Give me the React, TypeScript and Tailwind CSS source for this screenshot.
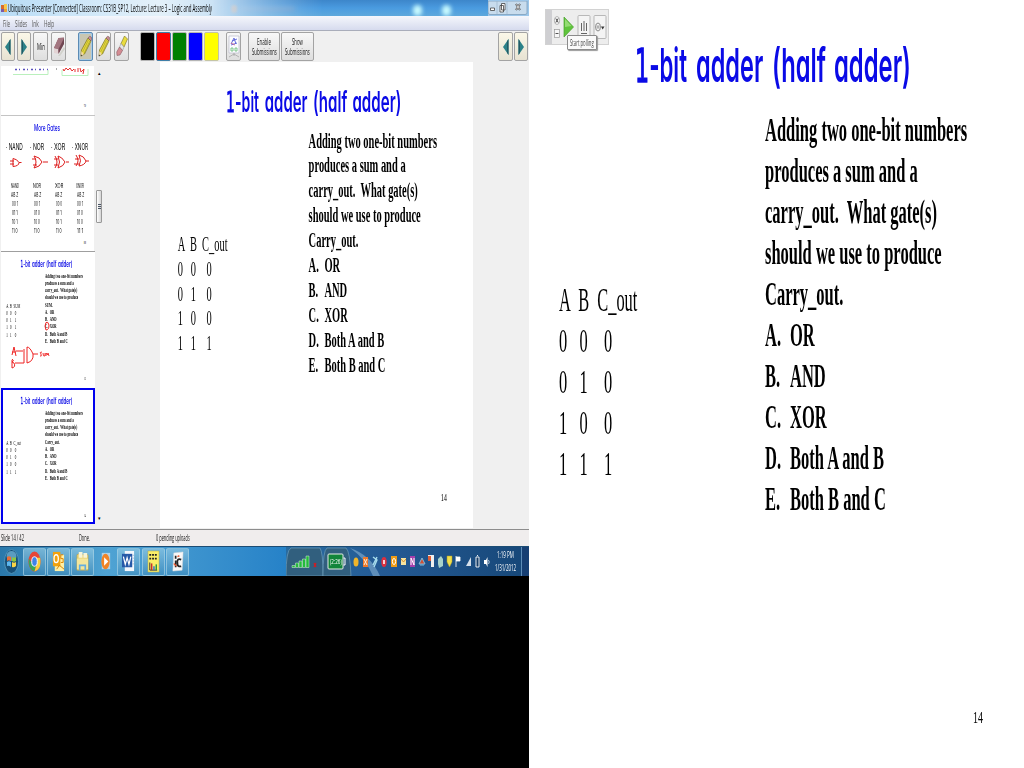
import { useLayoutEffect, useRef, useState, type ReactNode } from "react";

/* Text squeezed horizontally so that it fills the width of its box. */
function Fit({ className = "", children }: { className?: string; children: ReactNode }) {
  const box = useRef<HTMLSpanElement>(null);
  const text = useRef<HTMLSpanElement>(null);
  const [scale, setScale] = useState(1);
  useLayoutEffect(() => {
    if (box.current && text.current) setScale(box.current.clientWidth / text.current.offsetWidth);
  }, []);
  return (
    <span ref={box} className={`block shrink-0 whitespace-pre ${className}`}>
      <span ref={text} className="inline-block origin-left" style={{ transform: `scaleX(${scale})` }}>
        {children}
      </span>
    </span>
  );
}

const COMIC = "font-['Inter',sans-serif] [font-feature-settings:'cv11']";
const SERIF = "font-['Liberation_Serif',serif]";

const CARRY_ROWS = ["A  B  C_out", "0   0    0", "0   1    0", "1   0    0", "1   1    1"];
const SUM_ROWS = ["A  B  SUM", "0   0    0", "0   1    1", "1   0    1", "1   1    0"];
const CHOICES = [
  ["A.", "OR"],
  ["B.", "AND"],
  ["C.", "XOR"],
  ["D.", "Both A and B"],
  ["E.", "Both B and C"],
];

/* Full-size slide, 493 x 768; previews scale it down. */
function Slide({ target, rows, page }: { target: string; rows: string[]; page: string }) {
  const lines = ["Adding two one-bit numbers", "produces a sum and a", "carry_out.  What gate(s)", "should we use to produce", target];
  return (
    <div className="flex h-[768px] w-[493px] flex-col bg-white text-black">
      <div className={`flex h-[110px] pl-[104px] pt-[34px] text-[47px] font-semibold leading-[62px] text-[#0a0ae6] ${COMIC}`}>
        <Fit className="w-[52px]"><span className="font-['DejaVu_Sans'] font-normal [-webkit-text-stroke:1.5px_#0a0ae6]">1</span>-bit</Fit>
        <Fit className="ml-[9px] w-[67px]">adder</Fit>
        <Fit className="ml-[9px] w-[54px]">(half</Fit>
        <Fit className="ml-[8px] w-[77px]">adder)</Fit>
      </div>
      <div className={`flex h-[590px] text-[33px] leading-[41px] ${SERIF}`}>
        <div className="w-[234px] shrink-0 pl-[28px] pt-[170px]">
          <div className="origin-left scale-x-[0.497] whitespace-pre">
            {rows.map((r, i) => (
              <div key={i}>{r}</div>
            ))}
          </div>
        </div>
        <div className="w-[404px] shrink-0 origin-left scale-x-[0.5] whitespace-pre font-bold">
          {lines.map((l) => (
            <div key={l}>{l}</div>
          ))}
          {CHOICES.map(([k, v]) => (
            <div key={k} className="flex">
              <span className="w-[50px]">{k}</span>
              <span>{v}</span>
            </div>
          ))}
        </div>
      </div>
      <div className={`flex justify-end pr-[41px] text-[17px] leading-[36px] ${SERIF}`}>
        <Fit className="w-[10px]">{page}</Fit>
      </div>
    </div>
  );
}

function Thumb({ children }: { children: ReactNode }) {
  return (
    <div className="h-[135px] w-[93px] shrink-0 overflow-hidden">
      <div className="h-[768px] w-[493px] origin-top-left scale-x-[0.188] scale-y-[0.176]">{children}</div>
    </div>
  );
}

function ToolButton({ className = "", children }: { className?: string; children?: ReactNode }) {
  return (
    <div className={`flex h-[29px] shrink-0 items-center justify-center rounded-[2px] border border-[#a3a3a3] bg-linear-to-b ${className}`}>
      {children}
    </div>
  );
}

function Arrow({ right = false }: { right?: boolean }) {
  return (
    <svg className="h-[16px] w-[6px]" viewBox="0 0 6 16" preserveAspectRatio="none">
      <path d={right ? "M0.5 0 6 8 0.5 16Z" : "M5.5 0 0 8 5.5 16Z"} fill="#2c8288" />
      <path d={right ? "M0.5 0 2 2.2V13.8L0.5 16Z" : "M5.5 0 4 2.2V13.8L5.5 16Z"} fill="#225c66" />
    </svg>
  );
}

function Pencil() {
  return (
    <svg className="h-[23px] w-[12px]" viewBox="0 0 12 23" preserveAspectRatio="none">
      <path d="M8 3 11 6 4.5 19 1 21 1.5 15Z" fill="#e9dc3f" stroke="#77701f" strokeWidth=".7" />
      <path d="M8.7 4.5 2.6 17M10 5.5 4 18.5" stroke="#a29a25" strokeWidth=".6" />
      <path d="M8 3Q9.5 0 11.3 2 12 4 11 6Z" fill="#c88d92" stroke="#6d4a4d" strokeWidth=".5" />
      <path d="M1.4 16 3.8 19.2 1 21Z" fill="#efd7ae" />
      <path d="M1.1 19.5 2 20.5 .8 21.5Z" fill="#222" />
    </svg>
  );
}

function Eraser() {
  return (
    <svg className="h-[23px] w-[12px]" viewBox="0 0 12 23" preserveAspectRatio="none">
      <path d="M5 21 11 12 12 14 7 21Z" fill="#d2d2cc" />
      <path d="M5.500 3 11 2.500 11 8 5.500 18 1 17 1 13Z" fill="#8a5660" />
      <path d="M1 13 5.500 14 5.500 19 1 18Z" fill="#e2d3d4" />
      <path d="M5.500 14 11 3 11 9 5.500 19Z" fill="#704752" />
      <path d="M5.500 3 11 3 5.500 14 1 13Z" fill="#a37680" />
    </svg>
  );
}

function PencilEraser() {
  return (
    <svg className="h-[23px] w-[12px]" viewBox="0 0 12 23" preserveAspectRatio="none">
      <path d="M8.5 1 11.5 4 8 12 5 8.5Z" fill="#e9dc3f" stroke="#77701f" strokeWidth=".6" />
      <path d="M5 8.5 8 12 6.5 15.5 3.5 12Z" fill="#e6e6e6" stroke="#888" strokeWidth=".5" />
      <path d="M3.5 12 6.5 15.5 4 20 1 20.5 .7 17Z" fill="#d48c93" stroke="#7d4d52" strokeWidth=".5" />
    </svg>
  );
}

function PollIcon() {
  return (
    <svg className="h-[25px] w-[12px]" viewBox="0 0 12 25" preserveAspectRatio="none">
      <path d="M1 2H11V19H1Z" fill="#fcfcff" stroke="#b9bac8" strokeWidth=".7" />
      <path d="M3 10 6 4 8 10M4 7 9 5M3 11 9 9" stroke="#5a62d8" fill="none" strokeWidth=".9" />
      <path d="M3 9 7 11" stroke="#d05c82" strokeWidth=".8" />
      <path d="M3 14H5V17H3ZM7 14H9V17H7Z" fill="none" stroke="#63bb72" strokeWidth=".8" />
      <path d="M6 19V22M1 23 6 20 11 23" stroke="#a6a6a6" fill="none" strokeWidth=".8" />
    </svg>
  );
}

function TitleBar() {
  return (
    <div className="flex h-[16px] items-center bg-linear-to-r from-[#b8dcf6] from-0% via-[#e4f1fa] via-30% to-[#9cc6e9] to-60% text-black">
      <svg className="ml-[1px] h-[9px] w-[6px] shrink-0" viewBox="0 0 6 9" preserveAspectRatio="none">
        <path d="M0 1H3V5H0Z" fill="#d96b2c" />
        <path d="M3 0H6V5H3Z" fill="#f5c84b" />
        <path d="M0 5H3V8H0Z" fill="#7b5aa8" />
        <path d="M3 5H6V8H3Z" fill="#e9a23b" />
      </svg>
      <Fit className="ml-[1px] w-[204px] text-[10px] leading-[16px]">Ubiquitous Presenter [Connected] Classroom: CS31B_SP12, Lecture: Lecture 3 – Logic and Assembly</Fit>
      <div className="flex h-[16px] flex-1 items-end bg-linear-to-b from-[#3d86ca] via-[#4a9be0] to-[#5da8dc] mask-l-from-60% mask-l-to-100%">
        <span className="mb-[3px] ml-[19px] h-[8px] w-[6px] rounded-full bg-[#e49a6c] blur-[1px]" />
        <span className="mb-[5px] ml-[4px] h-[4px] w-[54px] bg-[#6e9dcc] blur-[2px]" />
        <span className="ml-[118px] h-[11px] w-[9px] rounded-full bg-[#c9fbff] blur-[2px]" />
        <span className="ml-[20px] h-[11px] w-[9px] rounded-full bg-[#c9fbff] blur-[2px]" />
      </div>
      <svg className="mr-[1px] h-[14px] w-[40px] shrink-0" viewBox="0 0 40 14" preserveAspectRatio="none">
        <path d="M0 0H39V12Q39 13.500 37 13.500H2Q0 13.500 0 11Z" fill="#c8dced" stroke="#7f9fbd" strokeWidth=".8" />
        <path d="M9 0V13M19 0V13" stroke="#9bb5cc" strokeWidth=".7" />
        <path d="M2.500 7H6.500V9.500H2.500Z" fill="#fff" stroke="#444" strokeWidth=".8" />
        <path d="M13.500 2.500H17V9H13.500ZM12 4.500H15.500V11H12Z" fill="#fff" stroke="#444" strokeWidth=".8" />
        <path d="M28 3 32 9M32 3 28 9" stroke="#444" strokeWidth="2" />
        <path d="M28.300 3.300 31.700 8.700M31.700 3.300 28.300 8.700" stroke="#fff" strokeWidth=".8" />
      </svg>
    </div>
  );
}

const GREY = "from-[#f8f8f8] to-[#dedede]";
const CREAM = "from-[#fbf8e8] to-[#e7e2d2]";

function Toolbar() {
  return (
    <div className="flex h-[32px] items-start bg-[#f0f0f0] pt-px text-[8.5px] leading-[10px] text-[#111]">
      <ToolButton className={`ml-px w-[14px] ${CREAM}`}><Arrow /></ToolButton>
      <ToolButton className={`ml-[2px] w-[14px] ${CREAM}`}><Arrow right /></ToolButton>
      <ToolButton className={`ml-[2px] w-[15px] ${GREY}`}><Fit className="w-[8px]">Min</Fit></ToolButton>
      <ToolButton className={`ml-[3px] w-[15px] ${GREY}`}><Eraser /></ToolButton>
      <div className="ml-[12px] flex h-[29px] w-[15px] shrink-0 items-center justify-center rounded-[2px] border border-[#5b8bb5] bg-[#c9c6b2] shadow-[inset_0_0_0_1px_#a9cbe5]"><Pencil /></div>
      <ToolButton className={`ml-[3px] w-[15px] ${GREY}`}><Pencil /></ToolButton>
      <ToolButton className={`ml-[3px] w-[15px] ${GREY}`}><PencilEraser /></ToolButton>
      <div className="ml-[11px] flex gap-px">
        {["bg-black border-[#b5b5b5]", "bg-[#ff0000] border-[#3f7fa8]", "bg-[#008000] border-[#b5b5b5]", "bg-[#0000ff] border-[#b5b5b5]", "bg-[#ffff00] border-[#c5c5a5]"].map((c) => (
          <span key={c} className={`h-[29px] w-[15px] rounded-[2px] border ${c}`} />
        ))}
      </div>
      <ToolButton className={`ml-[7px] w-[15px] ${GREY}`}><PollIcon /></ToolButton>
      <ToolButton className={`ml-[7px] w-[32px] flex-col border-[#8d8d8d] ${GREY}`}>
        <Fit className="h-[10px] w-[14px]">Enable</Fit>
        <Fit className="h-[10px] w-[25px]">Submissions</Fit>
      </ToolButton>
      <ToolButton className={`ml-px w-[33px] flex-col border-[#8d8d8d] ${GREY}`}>
        <Fit className="h-[10px] w-[11px]">Show</Fit>
        <Fit className="h-[10px] w-[25px]">Submissions</Fit>
      </ToolButton>
      <ToolButton className={`ml-auto w-[15px] ${CREAM}`}><Arrow /></ToolButton>
      <ToolButton className={`mr-px ml-px w-[14px] ${CREAM}`}><Arrow right /></ToolButton>
    </div>
  );
}

const GATES = [
  { name: "NAND", head: "· NAND", cls: "w-[17px]", rows: ["AB Z", "00 1", "01 1", "10 1", "11 0"] },
  { name: "NOR", head: "· NOR", cls: "w-[14px]", rows: ["AB Z", "00 1", "01 0", "10 0", "11 0"] },
  { name: "XOR", head: "· XOR", cls: "w-[14px]", rows: ["AB Z", "00 0", "01 1", "10 1", "11 0"] },
  { name: "XNOR", head: "· XNOR", cls: "w-[16px]", rows: ["AB Z", "00 1", "01 0", "10 0", "11 1"] },
];

function GatesThumb() {
  return (
    <div className={`flex h-[135px] w-[93px] shrink-0 flex-col items-center bg-white ${COMIC}`}>
      <Fit className="mt-[6px] mr-[2px] w-[26px] text-[9px] font-medium leading-[12px] text-[#0a0ae6]">More Gates</Fit>
      <div className="mt-[7px] flex h-[12px] w-full justify-between pr-[6px] pl-[5px] text-[8.5px] leading-[12px]">
        {GATES.map((g) => (
          <Fit key={g.name} className={g.cls}>{g.head}</Fit>
        ))}
      </div>
      <svg className="mt-[1px] h-[16px] w-[93px]" viewBox="0 0 93 16" preserveAspectRatio="none" fill="none" stroke="#dd1c1c" strokeWidth="1">
        <path d="M9 7H13M9 10H13M12 4.500V12.500Q18 12 18 8.500 16 5 12 4.500M18 8.500H20.500" />
        <path d="M31 5H35M32 11H36M33 2Q37 8 33 14Q39 13 41 8 39 3 33 2M42 8H47" />
        <path d="M53 5H57M53 11H57M54 2Q58 8 54 14M57 2Q60 8 57 14Q63 12 64 8 61 3 57 2M65 8H68" />
        <path d="M74 5H78M73 10H78M75 1Q79 7 75 12M78 1Q81 7 78 12Q84 11 85 7 83 2 78 1M85 7H88" />
      </svg>
      <div className="mt-[12px] grid w-[88px] grid-cols-[22px_23px_20px_23px] justify-items-center text-[5.5px] leading-[9px]">
        {GATES.map((g) => (
          <div key={g.name} className="flex flex-col items-center">
            <Fit className="w-[8px]">{g.name}</Fit>
            {g.rows.map((r, i) => (
              <Fit key={r} className={i === 0 ? "w-[7px] underline" : "w-[6px]"}>{r}</Fit>
            ))}
          </div>
        ))}
      </div>
      <span className="mt-[4px] mr-[8px] self-end text-[4px] leading-[6px]">II</span>
    </div>
  );
}

function SlideList() {
  return (
    <div className="flex h-[465px] w-[103px] shrink-0 overflow-hidden bg-[#f0f0f0]">
      <div className="flex w-[95px] flex-col pl-px">
        <div className="mt-[3px] flex h-[49px] w-[93px] shrink-0 flex-col bg-white">
          <svg className="h-[12px] w-[93px]" viewBox="0 0 93 12" fill="none">
            <path d="M14 3.500H47" stroke="#5a50bd" strokeWidth="1.500" strokeDasharray="2 2 1 3" />
            <path d="M12 8.500H47V4M61 4V9.500H87V3" stroke="#baf0bd" />
            <path d="M55 3H56" stroke="#555" />
            <path d="M62 3 63 5 65 2 67 4 69 2 71 5 73 3M74 3V6M77 2V6M79 2 80 6 83 3 82 8" stroke="#e53030" />
          </svg>
          <span className="mt-auto mr-[8px] mb-[7px] self-end text-[4px] leading-[5px] text-gray-700">9</span>
        </div>
        <div className="h-px w-[94px] shrink-0 bg-[#c4c4c4]" />
        <GatesThumb />
        <div className="h-px w-[94px] shrink-0 bg-[#9f9f9f]" />
        <div className="relative h-[136px] shrink-0 bg-white pt-px">
          <Thumb><Slide target="SUM." rows={SUM_ROWS} page="13" /></Thumb>
          <svg className="absolute top-[69px] left-[6px] h-[54px] w-[56px]" viewBox="0 0 56 54" fill="none" stroke="#ee2222" strokeWidth="1">
            <path d="M39 1.500Q37 5 39 9 42 9 42 4 41 0 39 1.500" />
            <path d="M5 34 7 26 9 35M5 31H9M5 39V47Q9 46 7 42L5 41Q8 40 5 38M9 30H16M8 42H17V28M20 26V42Q27 40 26 33 23 26 20 26M26 33H31" />
            <path d="M35 31Q32 31 34 33 35 36 33 35M36 32Q36 36 38 35V32M39 35V32L40.500 34 41 32 42 35" strokeWidth=".9" />
          </svg>
        </div>
        <div className="h-[136px] w-[94px] shrink-0 overflow-hidden border-[2.500px] border-[#0000ee] outline outline-1 -outline-offset-3 outline-[#0000ee]">
          <div className="-ml-[2px]">
            <Thumb><Slide target="Carry_out." rows={CARRY_ROWS} page="14" /></Thumb>
          </div>
        </div>
      </div>
      <div className="flex w-[8px] flex-col items-center pt-[7px] pb-[7px] text-[5px] leading-[6px] text-black">
        <span>▴</span>
        <div className="mt-[114px] flex h-[33px] w-[6px] flex-col items-center justify-center gap-px rounded-[1px] border border-[#999] bg-linear-to-r from-white to-[#d5d5d5]">
          <span className="h-px w-[3px] bg-gray-600" />
          <span className="h-px w-[3px] bg-gray-600" />
          <span className="h-px w-[3px] bg-gray-600" />
        </div>
        <span className="mt-auto">▾</span>
      </div>
    </div>
  );
}

function TaskIcon({ children, plain = false }: { children: ReactNode; plain?: boolean }) {
  return (
    <div className={`flex h-[28px] w-[23px] shrink-0 items-center justify-center ${plain ? "" : "rounded-[2px] border border-[#a4d0e4]/70 bg-linear-to-b from-[#a0d3e8]/60 to-[#3d88b5]/50"}`}>
      <svg className="h-[23px] w-[13px]" viewBox="0 0 14 24" preserveAspectRatio="none">{children}</svg>
    </div>
  );
}

function Taskbar() {
  return (
    <div className="flex h-[30px] items-center border-t border-[#1c4c74] bg-linear-to-r from-[#2a78aa] via-[#4fa3d3] via-20% to-[#2682c8] to-54% text-white">
      <div className="flex w-[23px] shrink-0 justify-center">
        <svg className="h-[25px] w-[15px]" viewBox="0 0 15 25" preserveAspectRatio="none">
          <ellipse cx="7.500" cy="12.500" rx="7" ry="12" fill="#175078" stroke="#4d93ba" />
          <ellipse cx="7.500" cy="7" rx="5" ry="5" fill="#5b9cc0" />
          <path d="M3 8Q5 6.500 7 8V12Q5 10.500 3 12Z" fill="#ea6c36" />
          <path d="M8 8Q10 9.500 12 8V12Q10 13.500 8 12Z" fill="#8cc63f" />
          <path d="M3 13Q5 11.500 7 13V18Q5 16 3 17Z" fill="#5cb7ef" />
          <path d="M8 13Q10 14.500 12 13V17Q10 19 8 18Z" fill="#f9d346" />
        </svg>
      </div>
      <TaskIcon>
        <ellipse cx="7" cy="12" rx="6.500" ry="10.500" fill="#e64536" />
        <path d="M.8 9Q0 20 7 22.500L9 15 5 14Z" fill="#3aa757" />
        <path d="M7 8H13Q15 20 7 22.500L9.500 14Z" fill="#f7cf3e" />
        <ellipse cx="7" cy="12" rx="3" ry="5" fill="#3f83e8" stroke="#fff" />
      </TaskIcon>
      <div className="w-px shrink-0" />
      <TaskIcon>
        <path d="M3 5H13V22H3Z" fill="#fff0a6" />
        <path d="M1 2H9V17H1Z" fill="#f2a20d" />
        <ellipse cx="4.500" cy="9" rx="2.300" ry="4" fill="none" stroke="#fff" strokeWidth="1.400" />
        <path d="M12 5H9.500V9H12V13H9.500M5 20 8 16 13 20" stroke="#d98200" fill="none" />
      </TaskIcon>
      <div className="w-px shrink-0" />
      <TaskIcon>
        <path d="M1 5 5 3 6 5H13V21H1Z" fill="#ead477" stroke="#b79b42" strokeWidth=".6" />
        <path d="M3 2H7V8H3ZM8 3H12V8H8Z" fill="#f7f4d7" />
        <path d="M1 9H13V20H1Z" fill="#f4e69b" />
        <path d="M4 21V16H10V21" fill="none" stroke="#65aede" strokeWidth="1.800" />
      </TaskIcon>
      <TaskIcon plain>
        <path d="M3 3H12V20H3Z" fill="#e8ecef" opacity=".65" />
        <ellipse cx="7" cy="12" rx="4.500" ry="8" fill="#f18426" />
        <path d="M5.500 7.500V16.500L10 12Z" fill="#fff" />
      </TaskIcon>
      <TaskIcon>
        <path d="M3 1H13V22H3Z" fill="#f3f7fc" />
        <path d="M0 4H11V18H0Z" fill="#2659a8" />
        <path d="M1.500 7 3.500 15 5.500 8 7.500 15 9.500 7" fill="none" stroke="#fff" strokeWidth="1.300" />
        <path d="M12 5V17" stroke="#7c9cc5" strokeDasharray="1 2" />
      </TaskIcon>
      <div className="w-[2px] shrink-0" />
      <TaskIcon>
        <path d="M1 1H13V23H1Z" fill="#faef68" stroke="#a8a151" strokeWidth=".5" />
        <path d="M2.500 5H11.500M2.500 9H11.500" stroke="#222" strokeWidth="1.800" strokeDasharray="2 1" />
        <path d="M3 13V21H11" stroke="#333" fill="none" />
        <path d="M5 21V14" stroke="#c92d2d" strokeWidth="1.600" />
        <path d="M7.500 21V17" stroke="#386ed1" strokeWidth="1.600" />
        <path d="M10 21V15" stroke="#2b993b" strokeWidth="1.600" />
      </TaskIcon>
      <div className="w-px shrink-0" />
      <TaskIcon>
        <path d="M3 3 13 2 12 21 2 22Z" fill="#f8f8f8" stroke="#ddd" strokeWidth=".5" />
        <path d="M5 6V9M5 11V18M11 10Q6 8 7 14 7 18 11 17" fill="none" stroke="#222" strokeWidth="1.800" />
        <path d="M3 14 6 17M7 7 9 6" stroke="#e55b35" strokeWidth="1.500" />
      </TaskIcon>
      <Tray />
    </div>
  );
}

function Tray() {
  return (
    <div className="ml-auto flex h-[29px] w-[243px] shrink-0 items-center bg-linear-to-r from-[#286ba0] via-[#245a94] via-40% to-[#164778]">
      <svg className="h-[29px] w-[198px] shrink-0" viewBox="0 0 198 29">
        <path d="M0 29Q0 3 5 1H34Q37 5 37 29Z" fill="#315f7e" stroke="#79a7c3" strokeWidth=".6" />
        <path d="M37 29Q37 3 41 1H60Q64 4 65 29Z" fill="#315f7e" stroke="#79a7c3" strokeWidth=".6" />
        <path d="M64 1Q85 8 94 29H87Q80 12 64 1Z" fill="#77a4c9" opacity=".7" />
        <path d="M6 20.500V18.500H9V20.500ZM9.500 20.500V16H12.500V20.500ZM13 20.500V14H16V20.500ZM16.500 20.500V12H19.500V20.500ZM20 20.500V9H23V20.500Z" fill="#24ba3c" stroke="#d6eed8" strokeWidth=".5" />
        <path d="M28 16 30 20M30 16 28 20" stroke="#cf1d24" strokeWidth="1.300" />
        <rect x="42" y="7" width="15" height="15" rx="1" fill="#12853a" stroke="#e7ede8" />
        <path d="M57.500 11H59V18H57.500" fill="none" stroke="#fff" />
        <ellipse cx="70" cy="15" rx="2.500" ry="4.500" fill="#f0b52b" />
        <path d="M77 10H82V20H77Z" fill="#ee792b" />
        <path d="M78 12 81 18M81 12 78 18" stroke="#fff0d8" />
        <path d="M87 10 91 13 88 20M91 10 87 18" stroke="#a7dcec" strokeWidth="1.400" fill="none" />
        <ellipse cx="98" cy="15" rx="2.700" ry="5" fill="#da3141" />
        <path d="M97 13H99V17H97Z" fill="#f7d0d5" />
        <path d="M105 9H111V20H105Z" fill="#ef9c16" />
        <ellipse cx="108" cy="14.500" rx="1.600" ry="3" fill="none" stroke="#fff" />
        <path d="M115 11H120V18H115Z" fill="#f6e3a0" />
        <path d="M115 12 117.500 15 120 12" stroke="#d5902e" fill="none" />
        <path d="M124 9H129V20H124Z" fill="#a63fac" />
        <path d="M125 18V11L128 18V11" stroke="#fff" fill="none" />
        <path d="M133 17 136 11 139 17ZM134 18H138" stroke="#7fbadc" strokeWidth="1" fill="#d25034" />
        <path d="M142 8H148V20H145V14H142Z" fill="#efefef" />
        <path d="M142 9H145V14H142Z" fill="#df5d35" />
        <path d="M152 12 155 9 157 12V19L153 21 152 17Z" fill="#a8d2c9" />
        <path d="M161 9H166V15L163.500 20 161 15Z" fill="#f2e04c" stroke="#ad9b25" strokeWidth=".5" />
        <path d="M170 9V20M170 10H174V14H170" stroke="#fff" fill="#fff" strokeWidth=".8" />
        <path d="M180 19 185 10V19Z" fill="#d6e1ec" />
        <path d="M190 10H193V20H190ZM191 8.500H192" fill="#163e68" stroke="#fff" strokeWidth=".9" />
      </svg>
      <svg className="h-[14px] w-[6px] shrink-0" viewBox="0 0 6 14">
        <path d="M0 5H2L3.500 2V12L2 9H0Z" fill="#fff" />
        <path d="M4.500 5Q6 7 4.500 9" stroke="#fff" fill="none" strokeWidth=".7" />
      </svg>
      <div className="ml-[5px] flex flex-col items-center pb-px text-[8.5px] leading-[13px]">
        <Fit className="w-[17px]">1:19 PM</Fit>
        <Fit className="w-[21px]">1/31/2012</Fit>
      </div>
      <div className="ml-auto h-full w-[8px] border-l border-[#5e8db8] bg-[#173f73]" />
    </div>
  );
}

function Presenter() {
  return (
    <div className="flex w-[529px] shrink-0 flex-col bg-black font-['Open_Sans',sans-serif]">
      <TitleBar />
      <div className="flex h-[15px] items-center border-b border-[#a9adba] bg-linear-to-b from-[#f5f7fc] to-[#d6dbee] pt-[2px] pl-[3px] text-[9px] leading-[12px] text-[#555]">
        <Fit className="w-[7px]">File</Fit>
        <Fit className="ml-[5px] w-[12px]">Slides</Fit>
        <Fit className="ml-[5px] w-[7px]">Ink</Fit>
        <Fit className="ml-[5px] w-[10px]">Help</Fit>
      </div>
      <Toolbar />
      <div className="-mt-px flex h-[467px] overflow-hidden bg-[#f0f0f0]">
        <div className="pt-px"><SlideList /></div>
        <div className="ml-[57px] h-[466px] w-[313px] shrink-0 overflow-hidden">
          <div className="h-[768px] w-[493px] origin-top-left scale-x-[0.635] scale-y-[0.607]">
            <Slide target="Carry_out." rows={CARRY_ROWS} page="14" />
          </div>
        </div>
      </div>
      <div className="flex h-[17px] shrink-0 items-center border-t border-[#8d8d8d] bg-[#f0eded] text-[9px] leading-[16px] text-[#111]">
        <Fit className="ml-px w-[23px]">Slide 14 / 42</Fit>
        <Fit className="ml-[55px] w-[11px]">Done.</Fit>
        <Fit className="ml-[66px] w-[34px]">0 pending uploads</Fit>
      </div>
      <div className="relative">
        <Taskbar />
        <div className="absolute top-[8px] left-[330px] text-[8px] leading-[14px] text-white">
          <Fit className="w-[12px]">(2:26)</Fit>
        </div>
      </div>
    </div>
  );
}

function PollingWidget() {
  return (
    <div className="absolute top-[9px] left-[16px] flex h-[36px] w-[64px] border border-[#d2d2d2] bg-[#ededed] font-['Open_Sans',sans-serif]">
      <div className="w-[6px] bg-[#cfcfd2]" />
      <svg className="h-[34px] w-[56px]" viewBox="0 0 56 34" fill="none">
        <ellipse cx="5" cy="10.500" rx="2.600" ry="4" fill="#f7f7f7" stroke="#999" strokeWidth=".7" />
        <path d="M3.800 8.500 6.200 12.500M6.200 8.500 3.800 12.500" stroke="#444" strokeWidth=".9" />
        <rect x="2.500" y="19.500" width="5" height="8" fill="#f7f7f7" stroke="#999" strokeWidth=".7" />
        <path d="M3.500 23.500H6.500" stroke="#555" />
        <path d="M12 7 21.500 17 12 27Z" fill="#5fc43c" stroke="#4aa12e" strokeWidth=".7" />
        <path d="M13 9 19.500 16 13 17Z" fill="#94dc73" />
        <rect x="26" y="5.500" width="12" height="23" rx="1" fill="#f4f4f4" stroke="#aaa" strokeWidth=".8" />
        <path d="M29.500 13V21M32 11V21M34.500 13V21M29 23.500H35" stroke="#555" strokeWidth=".9" />
        <rect x="42" y="5.500" width="12" height="23" rx="1" fill="#f4f4f4" stroke="#aaa" strokeWidth=".8" />
        <ellipse cx="46" cy="17" rx="2.400" ry="4" stroke="#888" />
        <ellipse cx="46" cy="17" rx=".8" ry="1.500" stroke="#888" strokeWidth=".7" />
        <path d="M49 16.500H52.500L50.700 19.500Z" fill="#333" />
      </svg>
      <div className="absolute top-[25px] left-[21px] flex h-[15px] w-[30px] items-center justify-center rounded-[1px] border border-[#8b8b8b] bg-[#fafafa] text-[9px] leading-[13px] text-[#444] shadow-[1px_1px_1px_#999]">
        <Fit className="w-[24px]">Start polling</Fit>
      </div>
    </div>
  );
}

export default function App() {
  return (
    <div className="flex h-[768px] w-[1024px] overflow-hidden bg-white">
      <Presenter />
      <div className="relative flex w-[495px] shrink-0 pl-[2px]">
        <Slide target="Carry_out." rows={CARRY_ROWS} page="14" />
        <PollingWidget />
      </div>
    </div>
  );
}
